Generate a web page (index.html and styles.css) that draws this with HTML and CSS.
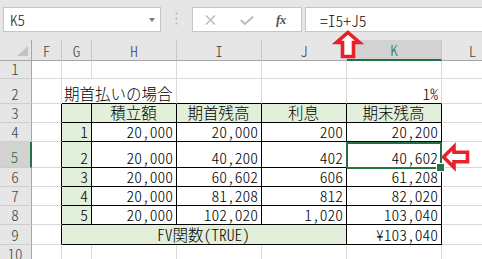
FILE: index.html
```html
<!DOCTYPE html>
<html lang="ja">
<head>
<meta charset="utf-8">
<link rel="stylesheet" href="styles.css">
</head>
<body>
<div class="toolbar">
  <div class="namebox"><span class="name">K5</span><span class="dd"></span></div>
  <div class="sep"><svg width="3" height="13" viewBox="0 0 3 13"><circle cx="1.5" cy="1.5" r="1" fill="#b4b4b4"/><circle cx="1.5" cy="6.5" r="1" fill="#b4b4b4"/><circle cx="1.5" cy="11.5" r="1" fill="#b4b4b4"/></svg></div>
  <div class="fxbtns">
    <svg class="btn-x" width="11" height="10" viewBox="0 0 11 10"><path d="M1 0.5 L10 9.5 M10 0.5 L1 9.5" stroke="#b8b8b8" stroke-width="1.4" fill="none"/></svg>
    <svg class="btn-ok" width="14" height="9" viewBox="0 0 14 9"><path d="M0.8 4 L4.8 8 L13.2 0.6" stroke="#b8b8b8" stroke-width="1.8" fill="none"/></svg>
    <span class="fx">fx</span>
  </div>
  <div class="formula">=I5+J5</div>
</div>

<div class="sheet">
  <div class="hd corner"><svg width="11" height="10" viewBox="0 0 11 10"><polygon points="11,0 11,10 0,10" fill="#c4c4c4"/></svg></div>
  <div class="hd">F</div><div class="hd">G</div><div class="hd">H</div><div class="hd">I</div><div class="hd">J</div><div class="hd sel">K</div><div class="hd">L</div>

  <div class="rh">1</div><div class="c"></div><div class="c"></div><div class="c"></div><div class="c"></div><div class="c"></div><div class="c"></div><div class="c"></div>

  <div class="rh">2</div><div class="c"></div><div class="c left bb span2">期首払いの場合</div><div class="c bb"></div><div class="c bb"></div><div class="c bb">1%</div><div class="c"></div>

  <div class="rh">3</div><div class="c br"></div><div class="c t g"></div><div class="c t g center">積立額</div><div class="c t g center">期首残高</div><div class="c t g center">利息</div><div class="c t g center">期末残高</div><div class="c"></div>

  <div class="rh">4</div><div class="c br"></div><div class="c t g">1</div><div class="c t">20,000</div><div class="c t">20,000</div><div class="c t">200</div><div class="c t">20,200</div><div class="c"></div>

  <div class="rh sel">5</div><div class="c br"></div><div class="c t g">2</div><div class="c t">20,000</div><div class="c t">40,200</div><div class="c t">402</div><div class="c t active">40,602</div><div class="c"></div>

  <div class="rh">6</div><div class="c br"></div><div class="c t g">3</div><div class="c t">20,000</div><div class="c t">60,602</div><div class="c t">606</div><div class="c t">61,208</div><div class="c"></div>

  <div class="rh">7</div><div class="c br"></div><div class="c t g">4</div><div class="c t">20,000</div><div class="c t">81,208</div><div class="c t">812</div><div class="c t">82,020</div><div class="c"></div>

  <div class="rh">8</div><div class="c br"></div><div class="c t g">5</div><div class="c t">20,000</div><div class="c t">102,020</div><div class="c t">1,020</div><div class="c t">103,040</div><div class="c"></div>

  <div class="rh">9</div><div class="c br"></div><div class="c t g center span4">FV関数(TRUE)</div><div class="c t">¥103,040</div><div class="c"></div>

  <div class="rh">10</div><div class="c"></div><div class="c"></div><div class="c"></div><div class="c"></div><div class="c"></div><div class="c"></div><div class="c"></div>
</div>

<svg class="arrows" width="482" height="259" viewBox="0 0 482 259">
  <polygon points="348,32.5 359.5,42.5 353.5,42.5 353.5,56.5 342.5,56.5 342.5,42.5 336.5,42.5" fill="#fff" stroke="#e8212b" stroke-width="3.6" stroke-linejoin="miter"/>
  <polygon points="443.5,157 454,146.5 454,152.2 467.5,152.2 467.5,161.8 454,161.8 454,167.5" fill="#fff" stroke="#e8212b" stroke-width="3.6" stroke-linejoin="miter"/>
</svg>
</body>
</html>
```

FILE: styles.css
```css
* {
  box-sizing: border-box;
}

body {
  margin: 0;
  width: 482px;
  height: 259px;
  overflow: hidden;
  position: relative;
  background: #fff;
  font-family: "Noto Sans CJK JP", "Noto Sans", sans-serif;
  font-weight: 300;
  font-feature-settings: "hwid" 1;
}

.toolbar {
  height: 40px;
  background: #e6e6e6;
  display: flex;
  align-items: flex-start;
  padding: 7px 0 0 3px;
}

.namebox {
  width: 158px;
  height: 25px;
  flex: none;
  background: #fff;
  border: 1px solid #c6c6c6;
  display: flex;
  align-items: center;
  justify-content: space-between;
  padding: 0 5px 0 6px;
}

.name {
  font-size: 15px;
  line-height: 16px;
  color: #222;
}

.dd {
  width: 0;
  height: 0;
  border-left: 3px solid transparent;
  border-right: 3px solid transparent;
  border-top: 4px solid #7a7a7a;
  margin-top: 1px;
}

.sep {
  width: 31px;
  flex: none;
  display: flex;
  justify-content: center;
  padding-top: 5px;
}

.sep svg {
  display: block;
}

.fxbtns {
  width: 110px;
  height: 25px;
  flex: none;
  background: #fff;
  border: 1px solid #c6c6c6;
  display: flex;
  align-items: center;
}

.btn-x {
  margin-left: 12px;
  margin-top: 1px;
}

.btn-ok {
  margin-left: 24px;
  margin-top: 2px;
}

.fx {
  margin-left: 22px;
  font-family: "Liberation Serif", serif;
  font-style: italic;
  font-weight: bold;
  font-size: 13px;
  color: #555;
  letter-spacing: -0.5px;
}

.formula {
  width: 200px;
  height: 25px;
  flex: none;
  margin-left: 3px;
  background: #fff;
  border: 1px solid #c6c6c6;
  padding-left: 14px;
  display: flex;
  align-items: center;
  font-size: 15.5px;
  line-height: 16px;
  color: #111;
}

.sheet {
  display: grid;
  grid-template-columns: 32px 30px 30px 85px 85px 85px 95px 62px;
  grid-template-rows: 21px 18px 25px 19px 19px 26px 19px 19px 19px 20px 19px;
  width: 504px;
}

.c {
  border-right: 1px solid #dadada;
  border-bottom: 1px solid #dadada;
  display: flex;
  align-items: flex-end;
  justify-content: flex-end;
  padding: 0 3px 2px 2px;
  font-size: 15.5px;
  line-height: 16px;
  color: #000;
  white-space: nowrap;
  position: relative;
}

.c.left {
  justify-content: flex-start;
}

.c.center {
  justify-content: center;
}

.span2 {
  grid-column: span 2;
}

.span4 {
  grid-column: span 4;
}

.c.br {
  border-right-color: #000;
}

.c.bb {
  border-bottom-color: #000;
}

.c.t {
  border-right-color: #000;
  border-bottom-color: #000;
}

.c.g {
  background: #e2efda;
}

.c.active::after {
  content: "";
  position: absolute;
  left: -1px;
  right: -1px;
  top: 0;
  bottom: -2px;
  border: 2px solid #217346;
}

.c.active::before {
  content: "";
  position: absolute;
  right: -4px;
  bottom: -5px;
  width: 7px;
  height: 7px;
  background: #217346;
  border: 1px solid #fff;
  z-index: 1;
}

.hd {
  background: #e6e6e6;
  border-right: 1px solid #c8c8c8;
  border-bottom: 1px solid #a6a6a6;
  display: flex;
  align-items: center;
  justify-content: center;
  font-size: 15px;
  line-height: 16px;
  color: #444;
  padding-top: 1px;
}

.hd.corner {
  align-items: flex-end;
  justify-content: flex-end;
  border-right-color: #a6a6a6;
  padding: 0 3px 4px 0;
}

.hd.corner svg {
  display: block;
}

.hd.sel {
  background: #d2d2d2;
  color: #217346;
  border-bottom: 2px solid #217346;
}

.rh {
  background: #e6e6e6;
  border-right: 1px solid #a6a6a6;
  border-bottom: 1px solid #cdcdcd;
  display: flex;
  align-items: flex-end;
  justify-content: center;
  padding: 0 1px 1px 0;
  font-size: 15px;
  line-height: 16px;
  color: #444;
}

.rh.sel {
  background: #d2d2d2;
  color: #217346;
  border-right: 2px solid #217346;
  padding-bottom: 2px;
}

.arrows {
  position: absolute;
  left: 0;
  top: 0;
  pointer-events: none;
}
```
